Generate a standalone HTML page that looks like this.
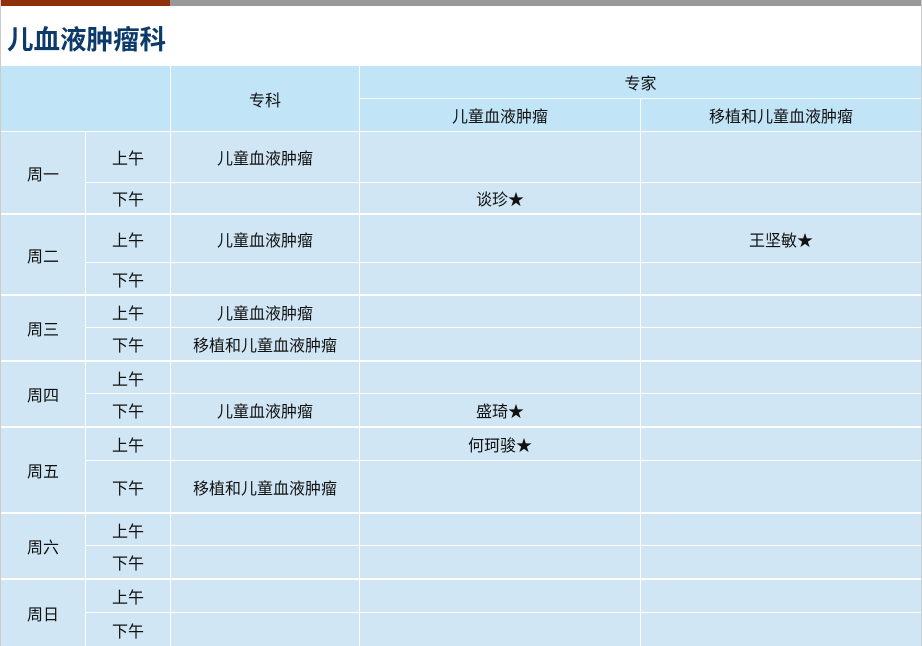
<!DOCTYPE html>
<html><head><meta charset="utf-8"><style>
html,body{margin:0;padding:0;width:922px;height:646px;overflow:hidden;background:#fff;position:relative;font-family:"Liberation Sans","Noto Sans CJK SC",sans-serif;}
.c{position:absolute;display:flex;align-items:center;justify-content:center;font-size:16px;color:#111;background:#D0E6F4;white-space:nowrap}
.h{background:#C1E4F6}
#lb{position:absolute;left:0;top:0;width:1px;height:646px;background:#ccc}
#rb{position:absolute;right:0;top:0;width:1px;height:646px;background:#ccc}
</style></head><body>
<div style="position:absolute;left:0;top:0;width:170px;height:6px;background:#8E300B"></div>
<div style="position:absolute;left:170px;top:0;width:752px;height:6px;background:#999"></div>
<div id="lb"></div><div id="rb"></div>
<div style="position:absolute;left:7px;top:18px;font-size:26.5px;font-weight:bold;color:#0C3A6A;font-family:'Liberation Sans','Noto Sans CJK SC',sans-serif">儿血液肿瘤科</div>

<div class="c h" style="left:1px;top:66px;width:169px;height:65px"></div>
<div class="c h" style="left:171px;top:66px;width:188px;height:65px">专科</div>
<div class="c h" style="left:360px;top:66px;width:561px;height:32px">专家</div>
<div class="c h" style="left:360px;top:99px;width:280px;height:32px">儿童血液肿瘤</div>
<div class="c h" style="left:641px;top:99px;width:280px;height:32px">移植和儿童血液肿瘤</div>

<div class="c" style="left:1px;top:132px;width:84px;height:81px">周一</div>
<div class="c" style="left:86px;top:132px;width:84px;height:50px">上午</div>
<div class="c" style="left:171px;top:132px;width:188px;height:50px">儿童血液肿瘤</div>
<div class="c" style="left:360px;top:132px;width:280px;height:50px"></div>
<div class="c" style="left:641px;top:132px;width:280px;height:50px"></div>
<div class="c" style="left:86px;top:183px;width:84px;height:30px">下午</div>
<div class="c" style="left:171px;top:183px;width:188px;height:30px"></div>
<div class="c" style="left:360px;top:183px;width:280px;height:30px">谈珍★</div>
<div class="c" style="left:641px;top:183px;width:280px;height:30px"></div>

<div class="c" style="left:1px;top:215px;width:84px;height:79px">周二</div>
<div class="c" style="left:86px;top:215px;width:84px;height:47px">上午</div>
<div class="c" style="left:171px;top:215px;width:188px;height:47px">儿童血液肿瘤</div>
<div class="c" style="left:360px;top:215px;width:280px;height:47px"></div>
<div class="c" style="left:641px;top:215px;width:280px;height:47px">王坚敏★</div>
<div class="c" style="left:86px;top:263px;width:84px;height:31px">下午</div>
<div class="c" style="left:171px;top:263px;width:188px;height:31px"></div>
<div class="c" style="left:360px;top:263px;width:280px;height:31px"></div>
<div class="c" style="left:641px;top:263px;width:280px;height:31px"></div>

<div class="c" style="left:1px;top:296px;width:84px;height:64px">周三</div>
<div class="c" style="left:86px;top:296px;width:84px;height:31px">上午</div>
<div class="c" style="left:171px;top:296px;width:188px;height:31px">儿童血液肿瘤</div>
<div class="c" style="left:360px;top:296px;width:280px;height:31px"></div>
<div class="c" style="left:641px;top:296px;width:280px;height:31px"></div>
<div class="c" style="left:86px;top:328px;width:84px;height:32px">下午</div>
<div class="c" style="left:171px;top:328px;width:188px;height:32px">移植和儿童血液肿瘤</div>
<div class="c" style="left:360px;top:328px;width:280px;height:32px"></div>
<div class="c" style="left:641px;top:328px;width:280px;height:32px"></div>

<div class="c" style="left:1px;top:362px;width:84px;height:64px">周四</div>
<div class="c" style="left:86px;top:362px;width:84px;height:31px">上午</div>
<div class="c" style="left:171px;top:362px;width:188px;height:31px"></div>
<div class="c" style="left:360px;top:362px;width:280px;height:31px"></div>
<div class="c" style="left:641px;top:362px;width:280px;height:31px"></div>
<div class="c" style="left:86px;top:394px;width:84px;height:32px">下午</div>
<div class="c" style="left:171px;top:394px;width:188px;height:32px">儿童血液肿瘤</div>
<div class="c" style="left:360px;top:394px;width:280px;height:32px">盛琦★</div>
<div class="c" style="left:641px;top:394px;width:280px;height:32px"></div>

<div class="c" style="left:1px;top:428px;width:84px;height:84px">周五</div>
<div class="c" style="left:86px;top:428px;width:84px;height:32px">上午</div>
<div class="c" style="left:171px;top:428px;width:188px;height:32px"></div>
<div class="c" style="left:360px;top:428px;width:280px;height:32px">何珂骏★</div>
<div class="c" style="left:641px;top:428px;width:280px;height:32px"></div>
<div class="c" style="left:86px;top:461px;width:84px;height:51px">下午</div>
<div class="c" style="left:171px;top:461px;width:188px;height:51px">移植和儿童血液肿瘤</div>
<div class="c" style="left:360px;top:461px;width:280px;height:51px"></div>
<div class="c" style="left:641px;top:461px;width:280px;height:51px"></div>

<div class="c" style="left:1px;top:514px;width:84px;height:64px">周六</div>
<div class="c" style="left:86px;top:514px;width:84px;height:31px">上午</div>
<div class="c" style="left:171px;top:514px;width:188px;height:31px"></div>
<div class="c" style="left:360px;top:514px;width:280px;height:31px"></div>
<div class="c" style="left:641px;top:514px;width:280px;height:31px"></div>
<div class="c" style="left:86px;top:546px;width:84px;height:32px">下午</div>
<div class="c" style="left:171px;top:546px;width:188px;height:32px"></div>
<div class="c" style="left:360px;top:546px;width:280px;height:32px"></div>
<div class="c" style="left:641px;top:546px;width:280px;height:32px"></div>

<div class="c" style="left:1px;top:580px;width:84px;height:66px">周日</div>
<div class="c" style="left:86px;top:580px;width:84px;height:32px">上午</div>
<div class="c" style="left:171px;top:580px;width:188px;height:32px"></div>
<div class="c" style="left:360px;top:580px;width:280px;height:32px"></div>
<div class="c" style="left:641px;top:580px;width:280px;height:32px"></div>
<div class="c" style="left:86px;top:613px;width:84px;height:33px">下午</div>
<div class="c" style="left:171px;top:613px;width:188px;height:33px"></div>
<div class="c" style="left:360px;top:613px;width:280px;height:33px"></div>
<div class="c" style="left:641px;top:613px;width:280px;height:33px"></div>
</body></html>
